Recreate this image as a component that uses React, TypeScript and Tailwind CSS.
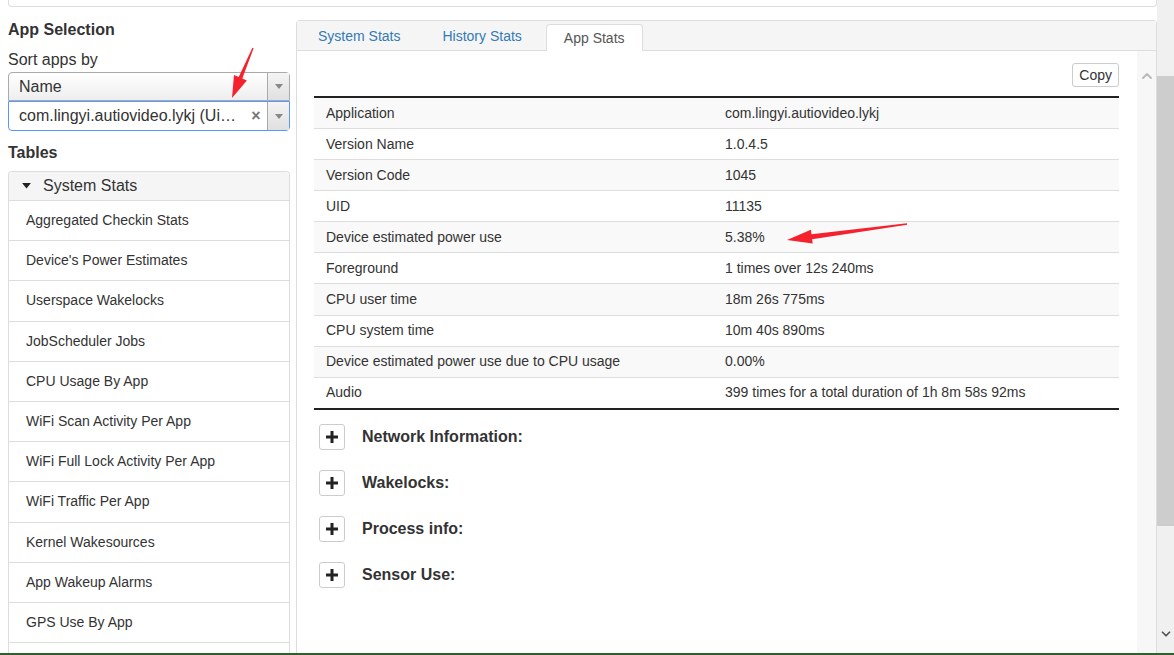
import { ChevronUp, ChevronDown } from "lucide-react";

const tables = [
  "Aggregated Checkin Stats",
  "Device's Power Estimates",
  "Userspace Wakelocks",
  "JobScheduler Jobs",
  "CPU Usage By App",
  "WiFi Scan Activity Per App",
  "WiFi Full Lock Activity Per App",
  "WiFi Traffic Per App",
  "Kernel Wakesources",
  "App Wakeup Alarms",
  "GPS Use By App",
];

const rows: [string, string][] = [
  ["Application", "com.lingyi.autiovideo.lykj"],
  ["Version Name", "1.0.4.5"],
  ["Version Code", "1045"],
  ["UID", "11135"],
  ["Device estimated power use", "5.38%"],
  ["Foreground", "1 times over 12s 240ms"],
  ["CPU user time", "18m 26s 775ms"],
  ["CPU system time", "10m 40s 890ms"],
  ["Device estimated power use due to CPU usage", "0.00%"],
  ["Audio", "399 times for a total duration of 1h 8m 58s 92ms"],
];

const sections = ["Network Information:", "Wakelocks:", "Process info:", "Sensor Use:"];

function Caret({ color = "#888", w = 8 }: { color?: string; w?: number }) {
  return (
    <svg width={w} height={w / 2 + 1} viewBox="0 0 8 5" aria-hidden="true">
      <path d="M0 0h8L4 5z" fill={color} />
    </svg>
  );
}

function PlusButton() {
  return (
    <div className="flex h-[26px] w-[26px] items-center justify-center rounded-[3px] border border-[#ccc] bg-white">
      <svg width="12" height="12" viewBox="0 0 12 12" aria-hidden="true">
        <rect x="4.5" y="0" width="3" height="12" fill="#222" />
        <rect x="0" y="4.5" width="12" height="3" fill="#222" />
      </svg>
    </div>
  );
}

export default function App() {
  return (
    <div
      className="relative flex h-[655px] w-[1174px] flex-col overflow-hidden bg-white text-[#333]"
      style={{ fontFamily: '"Liberation Sans", Arial, sans-serif' }}
    >
      <div className="flex min-h-0 flex-1">
        <div className="flex w-[1157px] flex-col pl-2">
          <div className="h-[7px] rounded-b-[4px] border border-t-0 border-[#ddd]" />

          <div className="mt-[13px] flex min-h-0 flex-1">
            {/* left column */}
            <div className="w-[282px] shrink-0">
              <div className="text-[16px] font-bold leading-[20px]">App Selection</div>
              <div className="mt-[10px] text-[16px] leading-[20px]">Sort apps by</div>

              <div className="mt-[2px] flex h-[29px] rounded-t-[4px] border border-[#aaa] bg-gradient-to-b from-white to-[#eee]">
                <div className="flex-1 pl-[10px] text-[16px] leading-[27px]">Name</div>
                <div className="flex w-[22px] items-center justify-center border-l border-[#aaa] bg-gradient-to-b from-[#f4f4f4] to-[#e0e0e0]">
                  <Caret />
                </div>
              </div>
              <div className="flex h-[30px] rounded-b-[4px] border border-[#5897fb] bg-white">
                <div className="flex-1 truncate pl-[10px] text-[16px] leading-[28px]">
                  com.lingyi.autiovideo.lykj (Ui…
                </div>
                <div className="w-[22px] text-center text-[16px] font-bold leading-[28px] text-[#777]">×</div>
                <div className="flex w-[22px] items-center justify-center border-l border-[#aaa] bg-gradient-to-b from-[#f4f4f4] to-[#e0e0e0]">
                  <Caret />
                </div>
              </div>

              <div className="mt-[12px] text-[16px] font-bold leading-[20px]">Tables</div>

              <div className="mt-[8px] rounded-t-[4px] border border-b-0 border-[#ddd]">
                <div className="flex h-[28px] items-center gap-[12px] rounded-t-[4px] bg-[#f5f5f5] pl-[13px] text-[16px]">
                  <Caret color="#222" w={9} />
                  <span>System Stats</span>
                </div>
                {tables.map((t) => (
                  <div
                    key={t}
                    className="flex h-[40.2px] items-center border-t border-[#ddd] pl-[17px] text-[14px]"
                  >
                    {t}
                  </div>
                ))}
                <div className="h-[40.2px] border-t border-[#ddd]" />
              </div>
            </div>

            {/* right panel */}
            <div className="ml-[6px] flex min-w-0 flex-1 flex-col rounded-t-[4px] border border-b-0 border-[#ddd]">
              <div className="flex h-[30px] items-end gap-[6px] border-b border-[#ddd] bg-[#f5f5f5] pl-[3px] text-[14px]">
                <div className="px-[18px] leading-[28px] text-[#337ab7]">System Stats</div>
                <div className="px-[18px] leading-[28px] text-[#337ab7]">History Stats</div>
                <div className="-mb-px rounded-t-[4px] border border-b-0 border-[#ddd] bg-white px-[17px] leading-[26px] text-[#555]">
                  App Stats
                </div>
              </div>

              <div className="flex min-h-0 flex-1">
                <div className="min-w-0 flex-1 pl-[17px] pr-[18px]">
                  <div className="flex justify-end pt-[12px]">
                    <div className="h-[24px] rounded-[3px] border border-[#ccc] px-[6px] text-[14px] leading-[22px]">
                      Copy
                    </div>
                  </div>

                  <div className="mt-[9px] border-y-2 border-t-[#222] border-b-[#222] text-[14px]">
                    {rows.map(([k, v], i) => (
                      <div
                        key={k}
                        className={`flex items-center ${i > 0 ? "h-[31.1px] border-t border-[#ddd]" : "h-[30px]"} ${
                          i % 2 === 0 ? "bg-[#f9f9f9]" : "bg-white"
                        }`}
                      >
                        <div className="w-[399px] pl-[12px]">{k}</div>
                        <div className="pl-[12px]">{v}</div>
                      </div>
                    ))}
                  </div>

                  <div className="mt-[4px]">
                    {sections.map((s) => (
                      <div key={s} className="flex h-[46px] items-center pl-[5px]">
                        <PlusButton />
                        <span className="ml-[17px] text-[16px] font-bold">{s}</span>
                      </div>
                    ))}
                  </div>
                </div>

                <div className="flex w-[19px] shrink-0 justify-center bg-[#f7f7f7] pt-[17px]">
                  <ChevronUp size={16} strokeWidth={3} className="text-[#bbb]" />
                </div>
              </div>
            </div>
          </div>
        </div>

        {/* page scrollbar */}
        <div className="flex w-[17px] flex-col bg-[#f0f0f0]">
          <div className="mt-[76px] h-[450px] bg-[#cdcdcd]" />
          <div className="flex-1" />
          <div className="flex justify-center pb-[12px]">
            <ChevronDown size={14} strokeWidth={3} className="text-[#555]" />
          </div>
        </div>
      </div>

      <div className="h-[2px] bg-[#2f5f2f]" />

      {/* annotation arrows */}
      <svg className="pointer-events-none absolute left-0 top-0" width="1174" height="655" aria-hidden="true">
        <polygon
          fill="#f5222d"
          points="232,98 246.9,80.4 242.3,78.5 253.6,48.3 252.4,47.7 238.7,76.9 234,75"
        />
        <polygon
          fill="#f5222d"
          points="787,240 812.7,243.6 812.1,239.2 907.1,224.7 906.9,223.3 811.5,234.2 810.9,229.8"
        />
      </svg>
    </div>
  );
}
